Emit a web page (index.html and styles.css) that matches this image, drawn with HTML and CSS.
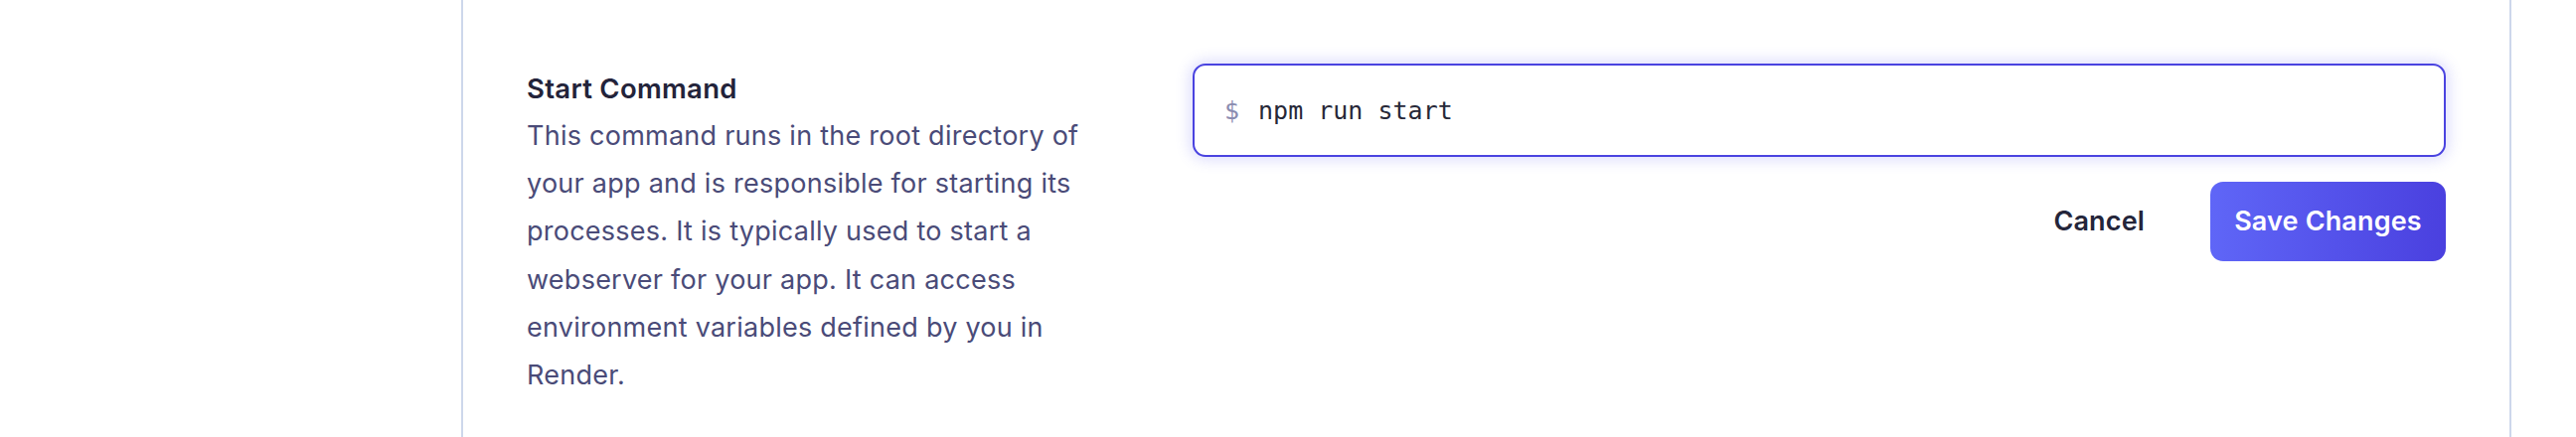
FILE: index.html
```html
<!DOCTYPE html>
<html lang="en">
<head>
<meta charset="utf-8">
<title>Start Command</title>
<link rel="stylesheet" href="styles.css">
</head>
<body>
<div class="layout">
  <aside class="sidebar"></aside>
  <main class="main">
    <section class="card">
      <div class="setting">
        <div class="setting-info">
          <h3 class="setting-title">Start Command</h3>
          <p class="setting-desc">This command runs in the root directory of your app and is responsible for starting its processes. It is typically used to start a webserver for your app. It can access environment variables defined by you in Render.</p>
        </div>
        <div class="setting-control">
          <div class="cmd-input">
            <span class="cmd-prefix">$</span>
            <span class="cmd-value">npm run start</span>
          </div>
          <div class="actions">
            <button class="btn btn-cancel" type="button">Cancel</button>
            <button class="btn btn-save" type="button">Save Changes</button>
          </div>
        </div>
      </div>
    </section>
  </main>
</div>
</body>
</html>
```

FILE: styles.css
```css
* { box-sizing: border-box; }

html, body {
  margin: 0;
  padding: 0;
  background: #ffffff;
  height: 100%;
}

body {
  font-family: Inter, "Liberation Sans", sans-serif;
  overflow: hidden;
}

.layout {
  display: flex;
  height: 440px;
}

.sidebar {
  width: 464px;
  flex: none;
}

.main {
  flex: 1;
  padding-right: 65px;
  display: flex;
}

.card {
  flex: 1;
  border-left: 2px solid #cdd7eb;
  border-right: 2px solid #cdd7eb;
  padding: 64px 64px 0 64px;
}

.setting {
  display: flex;
  gap: 70px;
  align-items: flex-start;
}

.setting-info {
  width: 600px;
  flex: none;
}

.setting-title {
  margin: 0;
  padding-top: 6px;
  font-size: 27.5px;
  line-height: 38px;
  font-weight: 600;
  letter-spacing: 0.3px;
  color: #23233a;
}

.setting-desc {
  margin: 5px 0 0;
  font-size: 27px;
  line-height: 48.2px;
  font-weight: 400;
  letter-spacing: 0.25px;
  color: #4a4b78;
}

.setting-control {
  flex: 1;
  display: flex;
  flex-direction: column;
  gap: 25px;
}

.cmd-input {
  height: 94px;
  border: 2px solid #4a43e0;
  border-radius: 13px;
  background: #ffffff;
  box-shadow: 0 0 14px 3px rgba(99, 102, 241, 0.22);
  display: flex;
  align-items: center;
  padding: 0 28px 0 30px;
  font-family: "DejaVu Sans Mono", "Liberation Mono", monospace;
  font-size: 25px;
  gap: 19px;
}

.cmd-prefix {
  color: #8a8cb0;
}

.cmd-value {
  color: #272838;
}

.actions {
  display: flex;
  justify-content: flex-end;
  align-items: center;
  gap: 40px;
}

.btn {
  font-family: Inter, "Liberation Sans", sans-serif;
  font-size: 27px;
  font-weight: 600;
  line-height: 40px;
  letter-spacing: 0.15px;
  border: none;
  border-radius: 13px;
  cursor: pointer;
}

.btn-cancel {
  background: transparent;
  color: #24253a;
  padding: 20px 26px;
}

.btn-save {
  color: #ffffff;
  background: linear-gradient(to right, #5f66f7, #4a40df);
  padding: 20px 24px;
  height: 80px;
  width: 237px;
}
```
